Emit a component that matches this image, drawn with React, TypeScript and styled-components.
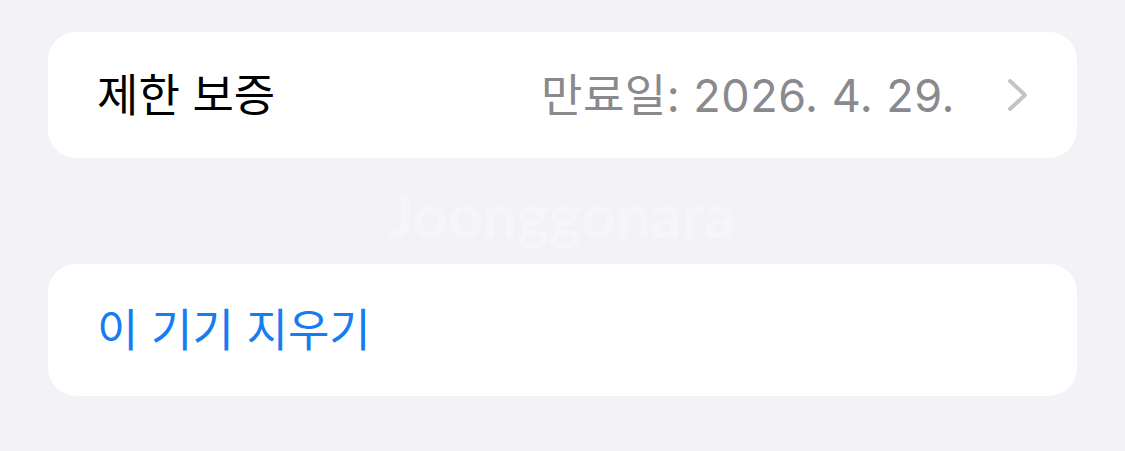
import React from "react";
import styled, { createGlobalStyle } from "styled-components";

const Global = createGlobalStyle`
  html, body { margin: 0; padding: 0; background: #f2f2f7; }
  body { font-family: "Inter", "Noto Sans CJK KR", "Noto Sans", sans-serif; }
`;

const Page = styled.div`
  width: 1125px;
  height: 451px;
  box-sizing: border-box;
  padding: 32px 48px 0 48px;
  display: flex;
  flex-direction: column;
  background: #f2f2f7;
`;

const Card = styled.div<{ h: number }>`
  height: ${(p) => p.h}px;
  background: #ffffff;
  border-radius: 28px;
  display: flex;
  align-items: center;
  padding: 0 48px 0 49px;
  box-sizing: border-box;
`;

const Label = styled.span<{ tone?: "blue" }>`
  font-family: "Inter", "Noto Sans CJK KR", sans-serif;
  font-size: 45px;
  color: ${(p) => (p.tone === "blue" ? "#167cf1" : "#000000")};
  line-height: 1;
`;

const Value = styled.span`
  margin-left: auto;
  font-family: "Inter", "Noto Sans CJK KR", sans-serif;
  font-size: 45px;
  letter-spacing: 0.5px;
  color: #8a8a8e;
  line-height: 1;
`;

const Chevron = styled.svg`
  margin-left: 52px;
  width: 22px;
  height: 34px;
  flex: none;
`;

const Gap = styled.div`
  height: 106px;
  display: flex;
  align-items: center;
  justify-content: center;
`;

const Watermark = styled.span`
  font-family: "Lato", sans-serif;
  font-weight: 700;
  font-size: 61px;
  color: #f6f6fa;
  margin-left: -3px;
  margin-top: 6px;
`;

export default function App() {
  return (
    <>
      <Global />
      <Page>
        <Card h={126}>
          <Label>제한 보증</Label>
          <Value>만료일: 2026. 4. 29.</Value>
          <Chevron viewBox="0 0 22 34">
            <path
              d="M3 3 L18 17 L3 31"
              fill="none"
              stroke="#c4c4c7"
              strokeWidth="4"
              strokeLinecap="round"
              strokeLinejoin="round"
            />
          </Chevron>
        </Card>
        <Gap>
          <Watermark>Joonggonara</Watermark>
        </Gap>
        <Card h={132}>
          <Label tone="blue">이 기기 지우기</Label>
        </Card>
      </Page>
    </>
  );
}
